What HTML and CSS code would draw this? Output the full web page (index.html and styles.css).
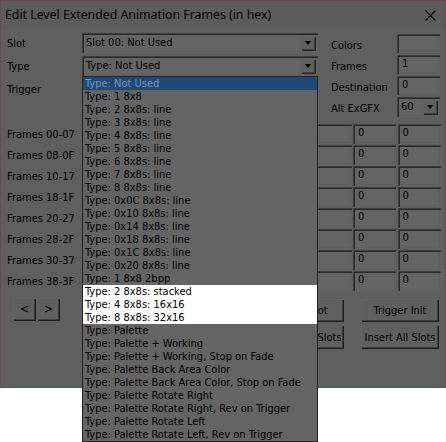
FILE: index.html
```html
<!DOCTYPE html>
<html>
<head>
<meta charset="utf-8">
<link rel="stylesheet" href="styles.css">
</head>
<body>
<div class="window">
  <div class="titlebar">
    <span class="title">Edit Level Extended Animation Frames (in hex)</span>
    <svg class="close" width="11" height="11" viewBox="0 0 11 11"><path d="M0.5 0.5 L10.5 10.5 M10.5 0.5 L0.5 10.5" stroke="#000" stroke-width="1.1" fill="none"/></svg>
  </div>
  <div class="content">
    <div class="top">
      <div class="left-fields">
        <span class="lbl">Slot</span>
        <div class="combo"><span class="val">Slot 00: Not Used</span><span class="dd"><i></i></span></div>
        <span class="lbl">Type</span>
        <div class="combo"><span class="val">Type: Not Used</span><span class="dd"><i></i></span></div>
        <span class="lbl">Trigger</span>
        <div class="combo"><span class="val"></span><span class="dd"><i></i></span></div>
      </div>
      <div class="right-fields">
        <span class="lbl rl">Colors</span>
        <div class="edit"></div>
        <span class="lbl rl">Frames</span>
        <div class="edit">1</div>
        <span class="lbl rl">Destination</span>
        <div class="edit">0</div>
        <span class="lbl rl">Alt ExGFX</span>
        <div class="combo small"><span class="val">60</span><span class="dd"><i></i></span></div>
      </div>
    </div>
    <div class="frames">
      <span class="lbl">Frames 00-07</span><div class="edit">0</div><div class="edit">0</div><div class="edit">0</div><div class="edit">0</div><div class="edit">0</div><div class="edit"></div><div class="edit">0</div><div class="edit">0</div>
      <span class="lbl">Frames 08-0F</span><div class="edit">0</div><div class="edit">0</div><div class="edit">0</div><div class="edit">0</div><div class="edit">0</div><div class="edit"></div><div class="edit">0</div><div class="edit">0</div>
      <span class="lbl">Frames 10-17</span><div class="edit">0</div><div class="edit">0</div><div class="edit">0</div><div class="edit">0</div><div class="edit">0</div><div class="edit"></div><div class="edit">0</div><div class="edit">0</div>
      <span class="lbl">Frames 18-1F</span><div class="edit">0</div><div class="edit">0</div><div class="edit">0</div><div class="edit">0</div><div class="edit">0</div><div class="edit"></div><div class="edit">0</div><div class="edit">0</div>
      <span class="lbl">Frames 20-27</span><div class="edit">0</div><div class="edit">0</div><div class="edit">0</div><div class="edit">0</div><div class="edit">0</div><div class="edit"></div><div class="edit">0</div><div class="edit">0</div>
      <span class="lbl">Frames 28-2F</span><div class="edit">0</div><div class="edit">0</div><div class="edit">0</div><div class="edit">0</div><div class="edit">0</div><div class="edit"></div><div class="edit">0</div><div class="edit">0</div>
      <span class="lbl">Frames 30-37</span><div class="edit">0</div><div class="edit">0</div><div class="edit">0</div><div class="edit">0</div><div class="edit">0</div><div class="edit"></div><div class="edit">0</div><div class="edit">0</div>
      <span class="lbl">Frames 38-3F</span><div class="edit">0</div><div class="edit">0</div><div class="edit">0</div><div class="edit">0</div><div class="edit">0</div><div class="edit"></div><div class="edit">0</div><div class="edit">0</div>
    </div>
    <div class="buttons">
      <div class="nav">
        <div class="btn navbtn">&lt;</div>
        <div class="btn navbtn">&gt;</div>
      </div>
      <div class="actions">
        <div class="btn">Copy Slot</div>
        <div class="btn">Trigger Init</div>
        <div class="btn">Delete All Slots</div>
        <div class="btn">Insert All Slots</div>
      </div>
    </div>
  </div>
  <div class="droplist">
    <div class="item sel">Type: Not Used</div>
    <div class="item">Type: 1 8x8</div>
    <div class="item">Type: 2 8x8s: line</div>
    <div class="item">Type: 3 8x8s: line</div>
    <div class="item">Type: 4 8x8s: line</div>
    <div class="item">Type: 5 8x8s: line</div>
    <div class="item">Type: 6 8x8s: line</div>
    <div class="item">Type: 7 8x8s: line</div>
    <div class="item">Type: 8 8x8s: line</div>
    <div class="item">Type: 0x0C 8x8s: line</div>
    <div class="item">Type: 0x10 8x8s: line</div>
    <div class="item">Type: 0x14 8x8s: line</div>
    <div class="item">Type: 0x18 8x8s: line</div>
    <div class="item">Type: 0x1C 8x8s: line</div>
    <div class="item">Type: 0x20 8x8s: line</div>
    <div class="item">Type: 1 8x8 2bpp</div>
    <div class="item lit">Type: 2 8x8s: stacked</div>
    <div class="item lit">Type: 4 8x8s: 16x16</div>
    <div class="item lit">Type: 8 8x8s: 32x16</div>
    <div class="item">Type: Palette</div>
    <div class="item">Type: Palette + Working</div>
    <div class="item">Type: Palette + Working, Stop on Fade</div>
    <div class="item">Type: Palette Back Area Color</div>
    <div class="item">Type: Palette Back Area Color, Stop on Fade</div>
    <div class="item">Type: Palette Rotate Right</div>
    <div class="item">Type: Palette Rotate Right, Rev on Trigger</div>
    <div class="item">Type: Palette Rotate Left</div>
    <div class="item">Type: Palette Rotate Left, Rev on Trigger</div>
  </div>
</div>
</body>
</html>
```
FILE: styles.css
```css
* { box-sizing: border-box; }
html, body { margin: 0; padding: 0; background: #fff; }
body {
  width: 446px; height: 442px; overflow: hidden;
  font-family: "DejaVu Sans Condensed", "DejaVu Sans", sans-serif;
  font-size: 11px; color: #000;
}
.window {
  position: relative;
  width: 446px; height: 388px;
  background: #5f5f5f;
  border: 1px solid #6b4a52;
}
.titlebar {
  height: 29px;
  display: flex; align-items: center; justify-content: space-between;
  padding: 0 9px 2px 4px;
  background: #5c5c5c;
  font-family: "Noto Sans", "Open Sans", sans-serif;
  font-size: 12.3px;
}
.close { display: block; margin-top: 1px; }
.content { padding: 3px 4px 0 6px; }
.top { display: flex; gap: 13px; }
.left-fields {
  display: grid; grid-template-columns: 75px 236px;
  grid-auto-rows: 20px; row-gap: 3px; align-items: center;
}
.right-fields {
  margin-top: 1px;
  display: grid; grid-template-columns: 66px 43px;
  grid-auto-rows: 19px; row-gap: 2px; align-items: center;
}
.lbl { white-space: nowrap; line-height: 13px; }
.rl { padding-top: 4px; }
.combo {
  height: 20px; display: flex; align-items: stretch;
  background: #646464;
  box-shadow: inset 1px 1px 0 #3e3e3e, inset 2px 2px 0 #292929, inset -1px -1px 0 #646464, inset -2px -2px 0 #5f5f5f;
  padding: 2px;
}
.combo .val { flex: 1; padding-left: 2px; line-height: 16px; white-space: nowrap; overflow: hidden; }
.combo .dd {
  width: 16px; display: flex; align-items: center; justify-content: center;
  background: #5f5f5f;
  box-shadow: inset 1px 1px 0 #5f5f5f, inset 2px 2px 0 #646464, inset -1px -1px 0 #262626, inset -2px -2px 0 #3e3e3e;
}
.combo .dd i {
  width: 0; height: 0; display: block;
  border-left: 3.5px solid transparent; border-right: 3.5px solid transparent;
  border-top: 4px solid #000;
}
.combo.small { height: 20px; }
.edit {
  height: 100%;
  background: #646464;
  box-shadow: inset 1px 1px 0 #3e3e3e, inset 2px 2px 0 #292929, inset -1px -1px 0 #646464, inset -2px -2px 0 #5f5f5f;
  padding: 2px 0 0 5px; line-height: 14px;
}
.frames {
  margin-top: 8px;
  display: grid; grid-template-columns: 77.5px repeat(8, 43px);
  grid-auto-rows: 20px; column-gap: 1.5px; row-gap: 1px; align-items: center;
}
.buttons { display: flex; justify-content: space-between; margin-top: 7px; }
.nav { display: flex; gap: 1px; margin-left: 6px; }
.btn {
  display: flex; align-items: center; justify-content: center;
  background: #5f5f5f; white-space: nowrap; line-height: 13px;
  box-shadow: inset 1px 1px 0 #646464, inset -1px -1px 0 #1a1a1a, inset -2px -2px 0 #3e3e3e;
}
.navbtn { width: 23px; height: 23px; font-size: 12px; }
.actions {
  margin: 1px 2px 0 0;
  display: grid; grid-template-columns: 80px 78px; grid-template-rows: 23px 24px;
  column-gap: 17px; row-gap: 3px;
}
.droplist {
  position: absolute; left: 81px; top: 75px;
  width: 236px;
  background: #646464;
  border: 1px solid #222;
}
.item { height: 13px; line-height: 13px; padding-left: 2px; white-space: nowrap; overflow: hidden; }
.item.sel { background: #1f4a78; color: #8391a6; }
.item.lit { background: #fff; color: #000; }
```
